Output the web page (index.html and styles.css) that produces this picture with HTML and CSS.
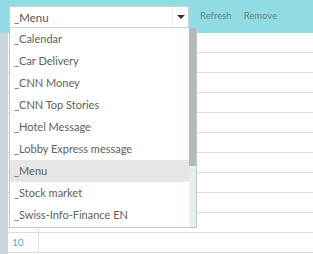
FILE: index.html
```html
<!DOCTYPE html>
<html lang="en">
<head>
    <meta charset="UTF-8">
    <title>Channels</title>
    <link rel="stylesheet" href="styles.css">
</head>
<body>
    <div class="toolbar">
        <div class="select">
            <span class="select-value">_Menu</span>
            <span class="select-arrow"></span>
        </div>
        <a class="tool-link">Refresh</a>
        <a class="tool-link">Remove</a>
    </div>

    <div class="content">
        <div class="side"></div>
        <div class="grid">
            <div class="grid-row grid-head"><span class="cell"></span></div>
            <div class="grid-row"><span class="num"></span><span class="cell"></span></div>
            <div class="grid-row"><span class="num"></span><span class="cell"></span></div>
            <div class="grid-row"><span class="num"></span><span class="cell"></span></div>
            <div class="grid-row"><span class="num"></span><span class="cell"></span></div>
            <div class="grid-row"><span class="num"></span><span class="cell"></span></div>
            <div class="grid-row"><span class="num"></span><span class="cell"></span></div>
            <div class="grid-row"><span class="num"></span><span class="cell"></span></div>
            <div class="grid-row"><span class="num"></span><span class="cell"></span></div>
            <div class="grid-row"><span class="num"></span><span class="cell"></span></div>
            <div class="grid-row"><span class="num">10</span><span class="cell"></span></div>
        </div>
    </div>

    <!-- open dropdown of the select -->
    <div class="dropdown">
        <ul class="options">
            <li>_Calendar</li>
            <li>_Car Delivery</li>
            <li>_CNN Money</li>
            <li>_CNN Top Stories</li>
            <li>_Hotel Message</li>
            <li>_Lobby Express message</li>
            <li class="active">_Menu</li>
            <li>_Stock market</li>
            <li>_Swiss-Info-Finance EN</li>
        </ul>
        <div class="scrollbar"><div class="thumb"></div></div>
    </div>
</body>
</html>
```

FILE: styles.css
```css
body {
    margin: 0;
    width: 313px;
    height: 254px;
    overflow: hidden;
    background-color: #ffffff;
    font-family: Lato, "Open Sans", sans-serif;
    position: relative;
}

.toolbar {
    display: flex;
    align-items: flex-start;
    height: 33px;
    padding: 6px 0 0 9px;
    box-sizing: border-box;
    background-color: #8fdde3;
}

.select {
    display: flex;
    align-items: center;
    width: 180px;
    height: 22px;
    box-sizing: border-box;
    background-color: #ffffff;
    border: 1px solid #c8d2d4;
}

.select-value {
    flex: 1;
    padding-left: 4px;
    font-size: 11.5px;
    color: #555555;
}

.select-arrow {
    position: relative;
    width: 15px;
    height: 20px;
    border-left: 1px solid #ebebeb;
}

.select-arrow::after {
    content: "";
    position: absolute;
    left: 4px;
    top: 8px;
    border-left: 4px solid transparent;
    border-right: 4px solid transparent;
    border-top: 4px solid #333333;
}

.tool-link {
    margin-left: 11px;
    line-height: 20px;
    font-size: 9.5px;
    color: #6a7d84;
}

.tool-link + .tool-link {
    margin-left: 12px;
}

.content {
    display: flex;
}

.side {
    width: 8px;
    height: 221px;
    background-color: #cad5da;
}

.grid {
    flex: 1;
}

.grid-row {
    display: flex;
    height: 19px;
    border-bottom: 1px solid #dcdcdc;
}

.num {
    width: 26px;
    border-right: 1px solid #e2e2e2;
    padding-left: 4px;
    font-size: 10px;
    line-height: 19px;
    color: #3cb7cf;
}

.cell {
    flex: 1;
}

.dropdown {
    position: absolute;
    left: 9px;
    top: 28px;
    width: 188px;
    height: 200px;
    box-sizing: border-box;
    display: flex;
    background-color: #ffffff;
    border: 1px solid #c3c7c9;
    border-top: none;
}

.options {
    flex: 1;
    list-style: none;
    margin: 0;
    padding: 0;
}

.options li {
    height: 22px;
    line-height: 22px;
    padding-left: 4px;
    font-size: 11px;
    color: #606060;
}

.options li.active {
    background-color: #e6e6e6;
}

.scrollbar {
    width: 7px;
    background-color: #e8edf0;
}

.thumb {
    height: 138px;
    background-color: #b3b8bb;
}
```
